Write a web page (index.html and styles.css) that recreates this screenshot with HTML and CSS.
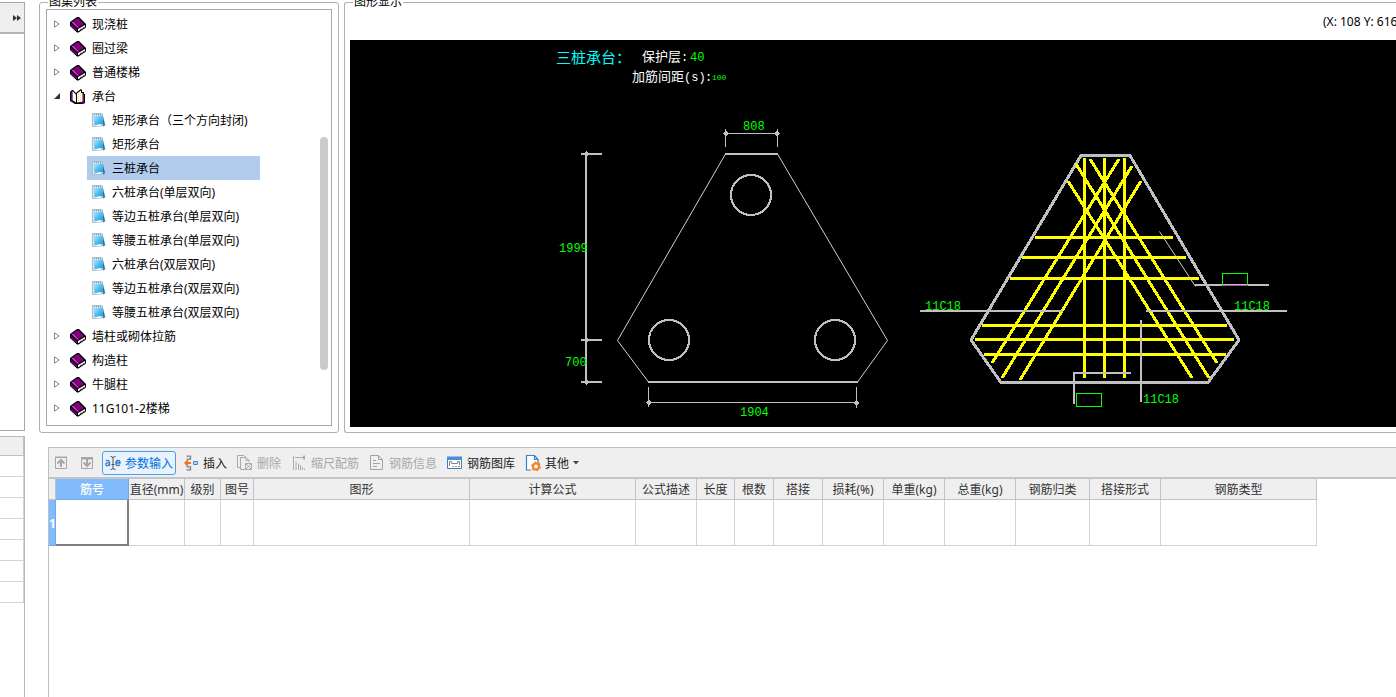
FILE: index.html
```html
<!DOCTYPE html>
<html lang="zh-CN">
<head>
<meta charset="utf-8">
<title>钢筋图集</title>
<link rel="stylesheet" href="styles.css">
</head>
<body>
<svg class="sprite" aria-hidden="true">
  <symbol id="closed" viewBox="0 0 6 8"><path d="M.5 .8V7.2L5.2 4Z" fill="#fff" stroke="#8a8a8a"/></symbol>
  <symbol id="opened" viewBox="0 0 6 8"><path d="M6 1V7H0Z" fill="#333"/></symbol>
  <symbol id="book" viewBox="0 0 16 16">
    <path d="M0 5 7 0h2l7 7v3.500L8.500 15.500H7L0 9Z" fill="#000"/>
    <path d="M1 5.500 8 1l6 6-7 4Z" fill="#800080"/>
    <path d="M1 7l6 5.500v2L1 8.800Z" fill="#800080"/>
    <path d="M2.500 5l6 6" stroke="#e8c8e8" stroke-dasharray="1 .6" fill="none"/>
    <path d="M8 12l7-4v2l-7 4.300Z" fill="#fff"/>
    <path d="M10 12.700l1.500-1M13 11l1-.7" stroke="#555"/>
  </symbol>
  <symbol id="openbook" viewBox="0 0 16 16">
    <path d="M0 3 2 1h1l3 3 1-1 4-3 1 1v2h2v2h1v9l-2 1H5L0 12Z" fill="#000"/>
    <path d="M13 5h1v9H6l6-1Z" fill="#800080"/>
    <path d="M1 3.500 2 3v8.500l3 2.500-4-2.500Z" fill="#800080"/>
    <path d="M2.500 2 6 5.500V13.500L2.500 11Z" fill="#fff"/>
    <path d="M7 4.500 11 1.500V4h1.500v8.500L7 13.500Z" fill="#fff"/>
    <path d="M8.500 5v7M10.500 4v8" stroke="#f2ea00" stroke-dasharray="1 1"/>
  </symbol>
  <linearGradient id="blue" x1="0" y1="0" x2="1" y2="1"><stop offset="0" stop-color="#b7e5fa"/><stop offset=".6" stop-color="#3fb8ee"/><stop offset="1" stop-color="#1d8fcf"/></linearGradient>
  <symbol id="note" viewBox="0 0 14 16">
    <path d="M.5 1.500h9.500l3 12L.5 14.500Z" fill="#d8e6f0" stroke="#a9bccb"/>
    <path d="M10.500 3l2.500 10-2 1.500Z" fill="#2b6f9c"/>
    <path d="M1.500 3.500h8.500l1.500 8.500-5 .5-4 1Z" fill="url(#blue)"/>
    <path d="M2 13.500l7-1.500-1 2Z" fill="#fff"/>
    <path d="M2 2.500h8" stroke="#7e99ac" stroke-dasharray="1 1"/>
  </symbol>
</svg>

<div class="app">
  <aside class="rail">
    <section class="rail-panel">
      <button class="rail-head" type="button" aria-label="展开"><svg width="8" height="6" viewBox="0 0 8 6"><path d="M0 0l4 3-4 3ZM4 0l4 3-4 3Z" fill="#333"/></svg></button>
    </section>
    <section class="rail-grid">
      <div class="rail-row rail-title"></div>
      <div class="rail-row"></div><div class="rail-row"></div><div class="rail-row"></div><div class="rail-row"></div><div class="rail-row"></div><div class="rail-row"></div><div class="rail-row"></div>
    </section>
  </aside>

  <main class="main">
    <div class="top">
      <section class="group atlas">
        <h2 class="group-title">图集列表</h2>
        <div class="tree-box">
          <ul class="tree">
            <li class="node"><svg class="tw"><use href="#closed"/></svg><svg class="bk"><use href="#book"/></svg>现浇桩</li>
            <li class="node"><svg class="tw"><use href="#closed"/></svg><svg class="bk"><use href="#book"/></svg>圈过梁</li>
            <li class="node"><svg class="tw"><use href="#closed"/></svg><svg class="bk"><use href="#book"/></svg>普通楼梯</li>
            <li class="node"><svg class="tw"><use href="#opened"/></svg><svg class="bk"><use href="#openbook"/></svg>承台</li>
            <li class="leaf"><svg class="nt"><use href="#note"/></svg>矩形承台（三个方向封闭)</li>
            <li class="leaf"><svg class="nt"><use href="#note"/></svg>矩形承台</li>
            <li class="leaf selected"><svg class="nt"><use href="#note"/></svg>三桩承台</li>
            <li class="leaf"><svg class="nt"><use href="#note"/></svg>六桩承台(单层双向)</li>
            <li class="leaf"><svg class="nt"><use href="#note"/></svg>等边五桩承台(单层双向)</li>
            <li class="leaf"><svg class="nt"><use href="#note"/></svg>等腰五桩承台(单层双向)</li>
            <li class="leaf"><svg class="nt"><use href="#note"/></svg>六桩承台(双层双向)</li>
            <li class="leaf"><svg class="nt"><use href="#note"/></svg>等边五桩承台(双层双向)</li>
            <li class="leaf"><svg class="nt"><use href="#note"/></svg>等腰五桩承台(双层双向)</li>
            <li class="node"><svg class="tw"><use href="#closed"/></svg><svg class="bk"><use href="#book"/></svg>墙柱或砌体拉筋</li>
            <li class="node"><svg class="tw"><use href="#closed"/></svg><svg class="bk"><use href="#book"/></svg>构造柱</li>
            <li class="node"><svg class="tw"><use href="#closed"/></svg><svg class="bk"><use href="#book"/></svg>牛腿柱</li>
            <li class="node"><svg class="tw"><use href="#closed"/></svg><svg class="bk"><use href="#book"/></svg>11G101-2楼梯</li>
          </ul>
          <div class="thumb"></div>
        </div>
      </section>

      <section class="group view">
        <h2 class="group-title">图形显示</h2>
        <div class="status"><output class="coords">(X: 108 Y: 616)</output></div>
        <div class="stage">
          <svg class="drawing" width="1046" height="387" viewBox="350 40 1046 387">
            <g class="line">
              <path class="w1 slope" d="M725.500 154 617.500 340.500 648.500 382M777.500 154 887.500 340.500 857.500 382"/>
              <path class="w2" d="M725 154H778M648 382H858"/>
              <circle class="w2" cx="751" cy="195" r="20"/><circle class="w2" cx="669" cy="340" r="20"/><circle class="w2" cx="835" cy="340" r="20"/>
              <path class="w1" d="M725.500 129V147M777.500 129V147M725 133.500H777M648.500 387V407M856.500 387V408M647 402.500H857"/>
              <path class="w2" d="M586 153V384M581 154H602M581 340H602M581 382H602"/>
              <path class="dot" d="M725.500 130.500l3 3-3 3-3-3ZM777 130.500l3 3-3 3-3-3ZM648.500 399.500l3 3-3 3-3-3ZM856.500 400l3 3-3 3-3-3ZM586 151l3 3-3 3-3-3ZM586 337l3 3-3 3-3-3ZM586 379l3 3-3 3-3-3Z"/>
            </g>
            <g class="line">
              <path class="w3" d="M1081 155.500H1130L1239 340 1208 382.500H1001L971 340Z"/>
            </g>
            <g class="bar">
              <path d="M1084.500 158V378M1104.500 158V378M1124.500 158V378"/>
              <path d="M1035 237.500H1173M1022 257.500H1186M1010 278.500H1199M982 325.500H1227M975 339.500H1234M984 354.500H1226"/>
              <path d="M1090 159 1217 363M1076 164 1209 378M1068 181 1192 378"/>
              <path d="M1119 159 992 363M1132 166 1002 378M1141 181 1020 380"/>
            </g>
            <g class="line">
              <path class="w2" d="M920 311H1063M1146 311H1287M1141 320V402M1074 404V373H1131M1195 285H1269"/>
              <path class="w1 slope" d="M1159.500 231.500 1195.500 286.500"/>
            </g>
            <path class="tag" d="M1076.500 393.500H1101.500V406.500H1076.500ZM1222.500 285V273.500H1247.500V285"/>
            <path class="tag-base" d="M1222 285.500H1248"/>
            <g class="dim">
              <text x="743" y="130">808</text>
              <text x="559" y="252">1999</text>
              <text x="565" y="366">700</text>
              <text x="740" y="416">1904</text>
              <text x="925" y="310">11C18</text>
              <text x="1234" y="310">11C18</text>
              <text x="1143" y="403">11C18</text>
              <text x="690" y="61">40</text>
              <text class="tiny" x="712" y="80">100</text>
            </g>
            <text class="name" x="556" y="63">三桩承台：</text>
            <text class="label" x="642" y="61">保护层<tspan class="latin">:</tspan></text>
            <text class="label" x="632" y="81">加筋间距<tspan class="latin">(s)</tspan></text>
            <text class="label latin" x="705" y="81">:</text>
          </svg>
        </div>
      </section>
    </div>

    <section class="bottom">
      <div class="toolbar">
        <button class="tool" type="button" disabled aria-label="上移"><svg width="16" height="16"><path d="M2.500 2.500h11v11h-11Z" fill="none" stroke="#a6a6a6"/><path d="M2 1.500h12v1.500H2Z" fill="#a6a6a6"/><path d="M8 12V6M4.500 8.500 8 5l3.500 3.500" fill="none" stroke="#a6a6a6" stroke-width="2"/></svg></button>
        <button class="tool" type="button" disabled aria-label="下移"><svg width="16" height="16"><path d="M2.500 2.500h11v11h-11Z" fill="none" stroke="#a6a6a6"/><path d="M2 2h12v2.500H2Z" fill="#a6a6a6"/><path d="M8 4v6M4.500 7.500 8 11l3.500-3.500" fill="none" stroke="#a6a6a6" stroke-width="2"/></svg></button>
        <button class="tool active" type="button"><svg width="16" height="16"><g fill="none" stroke="#3579c4" stroke-width="1.300"><path d="M1 6q1.300-.9 2.700-.3.800.5.800 1.600V11M4.500 7.700Q.8 7.500.8 9.500q.3 1.900 2.400 1 1.100-.5 1.300-1.500M11 8h4q0-2.500-2-2.500t-2.100 2.700q.1 2.300 2.100 2.300 1.200 0 2-.7"/></g><path d="M5.500 1.500Q8 1.500 8 3q0-1.500 2.500-1.500M5.500 14.500Q8 14.500 8 13q0 1.500 2.500 1.500M8 3v10M6.500 9.500h3" fill="none" stroke="#555"/></svg><span>参数输入</span></button>
        <button class="tool" type="button"><svg width="16" height="16"><g fill="none" stroke="#78838d" stroke-width="1.300"><path d="M3.500 1.200h4v3h-4M3.500 14.800h4v-3h-4"/></g><path d="M2.500 8H8M5 5.200 2.300 8 5 10.800" fill="none" stroke="#f0731b" stroke-width="1.800"/><path d="M10.500 6.500h4v3h-4Z" fill="#b8d8f4" stroke="#3f86d0"/></svg><span>插入</span></button>
        <button class="tool" type="button" disabled><svg width="16" height="16"><g fill="none" stroke="#aaa"><path d="M4 12.500H.5v-12H7L9 2.500M8 14.500H3.500v-12H9l3 3V7M9 2.500v3h3"/><path d="M8.500 8.500h6v6h-6ZM8.500 8.500l6 6M14.500 8.500l-6 6"/></g></svg><span>删除</span></button>
        <button class="tool" type="button" disabled><svg width="16" height="16"><g fill="none" stroke="#aaa"><path d="M2.500 1v14M4 2.500h10M11.500.5l2 2-2 2M13.500.5v4M5 15V6.500M7.500 15V8.500M9.500 15v-5M11.500 15v-3M13.500 15v-1.500"/></g></svg><span>缩尺配筋</span></button>
        <button class="tool" type="button" disabled><svg width="16" height="16"><g fill="none" stroke="#a3a3a3"><path d="M1.500.5h8l4 4v10h-12ZM9.500.5v4h4M4 5.500h3M4 8.500h7M4 11.500h4"/></g></svg><span>钢筋信息</span></button>
        <button class="tool" type="button"><svg width="16" height="16"><path d="M.5 2.500h14v11H.5Z" fill="#fff" stroke="#3d7fc9"/><path d="M0 1.500h15V5H0Z" fill="#4a8edb"/><path d="M2.500 11V6.500h2v2h6v-2h2V10" fill="none" stroke="#888"/><path d="M5 11.500h2" stroke="#f0a030"/><path d="M8 11.500h2" stroke="#5ab75a"/><path d="M11 11.500h2" stroke="#e05555"/></svg><span>钢筋图库</span></button>
        <button class="tool" type="button"><svg width="16" height="16"><path d="M6 15H1.500V.5h8l3.500 4V8M9.500.5v4H13" fill="#fff" stroke="#3d7fc9" stroke-width="1.200"/><circle cx="11" cy="11.500" r="3" fill="#fff" stroke="#f58220" stroke-width="2"/><circle cx="11" cy="11.500" r="4.300" fill="none" stroke="#f58220" stroke-width="1.200" stroke-dasharray="2.200 2.300"/></svg><span>其他</span><svg class="caret" width="6" height="4"><path d="M0 0h6L3 3.500Z" fill="#444"/></svg></button>
      </div>
      <table class="grid">
        <colgroup><col class="c-no"><col class="c-name"><col class="c-dia"><col class="c-lv"><col class="c-id"><col class="c-shape"><col class="c-calc"><col class="c-m"><col class="c-len"><col class="c-num"><col class="c-lap"><col class="c-m"><col class="c-m"><col class="c-total"><col class="c-class"><col class="c-total"><col class="c-type"></colgroup>
        <thead><tr><th></th><th class="current">筋号</th><th>直径(mm)</th><th>级别</th><th>图号</th><th>图形</th><th>计算公式</th><th>公式描述</th><th>长度</th><th>根数</th><th>搭接</th><th>损耗(%)</th><th>单重(kg)</th><th>总重(kg)</th><th>钢筋归类</th><th>搭接形式</th><th>钢筋类型</th></tr></thead>
        <tbody><tr><th class="row-no">1</th><td class="focus"></td><td></td><td></td><td></td><td></td><td></td><td></td><td></td><td></td><td></td><td></td><td></td><td></td><td></td><td></td><td></td></tr></tbody>
      </table>
    </section>
  </main>
</div>
</body>
</html>
```
FILE: styles.css
```css
* { box-sizing: border-box; }

body {
  margin: 0;
  background: #fff;
  color: #000;
  font: 12px/16px "Noto Sans", "Noto Sans CJK SC", sans-serif;
  overflow: hidden;
}

.sprite { position: absolute; width: 0; height: 0; }
svg { flex: none; }

.app { display: flex; height: 100vh; }

/* left rail */
.rail {
  flex: none;
  width: 25px;
  display: flex;
  flex-direction: column;
  gap: 5px;
  padding-top: 2px;
}
.rail-panel {
  height: 429px;
  border: solid #a8a8a8;
  border-width: 1px 1px 1px 0;
}
.rail-head {
  display: flex;
  align-items: center;
  justify-content: flex-end;
  width: 100%;
  height: 31px;
  padding: 0 3px 0 0;
  border: 0;
  border-bottom: 2px solid #b4b4b4;
  background: #efefef;
}
.rail-grid {
  flex: 1;
  border: solid #b8b8b8;
  border-width: 1px 1px 0 0;
}
.rail-row {
  height: 21px;
  border: solid #d4d4d4;
  border-width: 0 1px 1px 0;
}
.rail-title { height: 19px; background: #efefef; border-color: #c0c0c0; }

.main {
  flex: 1;
  min-width: 0;
  display: flex;
  flex-direction: column;
  gap: 14px;
  padding-top: 2px;
}
.top { display: flex; gap: 5px; padding-left: 14px; }

/* titled groups */
.group {
  position: relative;
  border: 1px solid #b0b0b0;
  border-radius: 3px;
}
.group-title {
  position: absolute;
  top: -9px;
  left: 8px;
  margin: 0;
  padding: 0 1px;
  background: #fff;
  font-size: 12px;
  font-weight: 400;
  line-height: 16px;
}
.atlas { flex: none; width: 300px; padding: 6px; }
.tree-box {
  position: relative;
  padding: 2px 0 5px;
  border: 1px solid #a8a8a8;
}
.tree { margin: 0; padding: 0; list-style: none; }
.node, .leaf { display: flex; align-items: center; height: 24px; padding-top: 2px; white-space: nowrap; }
.node { padding-left: 7px; }
.leaf { width: 173px; margin-left: 40px; padding-left: 5px; }
.selected { background: #b1cbed; }
.tw { width: 6px; height: 8px; margin: 0 10px 2px 0; }
.bk { width: 16px; height: 16px; margin-right: 6px; }
.nt { width: 14px; height: 16px; margin: 0 6px 2px 0; }
.thumb {
  position: absolute;
  top: 127px;
  right: 3px;
  width: 8px;
  height: 233px;
  border-radius: 4px;
  background: #cacaca;
}

.view {
  flex: 1;
  min-width: 0;
  border-right: 0;
  border-radius: 3px 0 0 3px;
  padding: 0 0 5px 5px;
}
.status {
  display: flex;
  align-items: center;
  justify-content: flex-end;
  height: 37px;
}
.coords { width: 73px; overflow: hidden; white-space: nowrap; }
.stage { background: #000; overflow: hidden; }

/* drawing */
.drawing { display: block; }
.line { fill: none; stroke: #c0c0c0; shape-rendering: crispEdges; }
.w1 { stroke-width: 1px; }
.slope { stroke: #d0d0d0; shape-rendering: auto; }
.w2 { stroke-width: 2px; }
.w3 { stroke-width: 3px; }
.dot { fill: #c0c0c0; stroke: none; }
.bar { fill: none; stroke: #ff0; stroke-width: 3px; shape-rendering: crispEdges; }
.tag { fill: none; stroke: #0f0; shape-rendering: crispEdges; }
.tag-base { stroke: #b04ab0; shape-rendering: crispEdges; }
.dim { fill: #0f0; font: 12px "Liberation Mono", monospace; }
.tiny { font-size: 8px; }
.name { fill: #0ff; font: 15px "Noto Sans CJK SC", sans-serif; }
.label { fill: #fff; font: 13px "Noto Sans CJK SC", sans-serif; }
.latin { font: 12px "Liberation Mono", monospace; }

/* toolbar and grid */
.bottom { flex: 1; margin-left: 23px; border: solid #bcbfc4; border-width: 1px 0 0 1px; }
.toolbar {
  display: flex;
  align-items: center;
  gap: 4px;
  height: 31px;
  padding-left: 1px;
  background: #efefef;
  border-bottom: 2px solid #c4c4c4;
}
.tool {
  display: flex;
  align-items: center;
  gap: 4px;
  height: 24px;
  padding: 0 2px;
  border: 1px solid transparent;
  border-radius: 3px;
  background: none;
  color: #222;
  font: inherit;
  white-space: nowrap;
}
.tool span { padding-top: 2px; }
.tool:disabled { color: #a8a8a8; }
.active { background: #e8f3fe; border-color: #4a9ef0; color: #0070dc; }

.grid { table-layout: fixed; width: 1268px; border-spacing: 0; }
.grid th, .grid td { padding: 0; border: solid #d2d2d2; border-width: 0 1px 1px 0; }
.grid th {
  height: 21px;
  padding-top: 2px;
  background: #efefef;
  border-color: #c2c2c2;
  color: #333;
  font-weight: 400;
  line-height: 16px;
  white-space: nowrap;
}
.grid td { height: 46px; }
.grid .current { background: #82bbfb; border-color: #6ea9ec; color: #fff; font-weight: 500; }
.grid .row-no { background: #82bbfb; border-color: #6ea9ec; color: #fff; font-weight: 700; }
.grid .focus { border: solid #808080; border-width: 0 2px 2px 0; }
.c-no { width: 7px; }
.c-name { width: 73px; }
.c-dia { width: 56px; }
.c-lv { width: 36px; }
.c-id { width: 33px; }
.c-shape { width: 216px; }
.c-calc { width: 166px; }
.c-m { width: 61px; }
.c-len { width: 38px; }
.c-num { width: 39px; }
.c-lap { width: 49px; }
.c-total { width: 71px; }
.c-class { width: 74px; }
.c-type { width: 156px; }
```
